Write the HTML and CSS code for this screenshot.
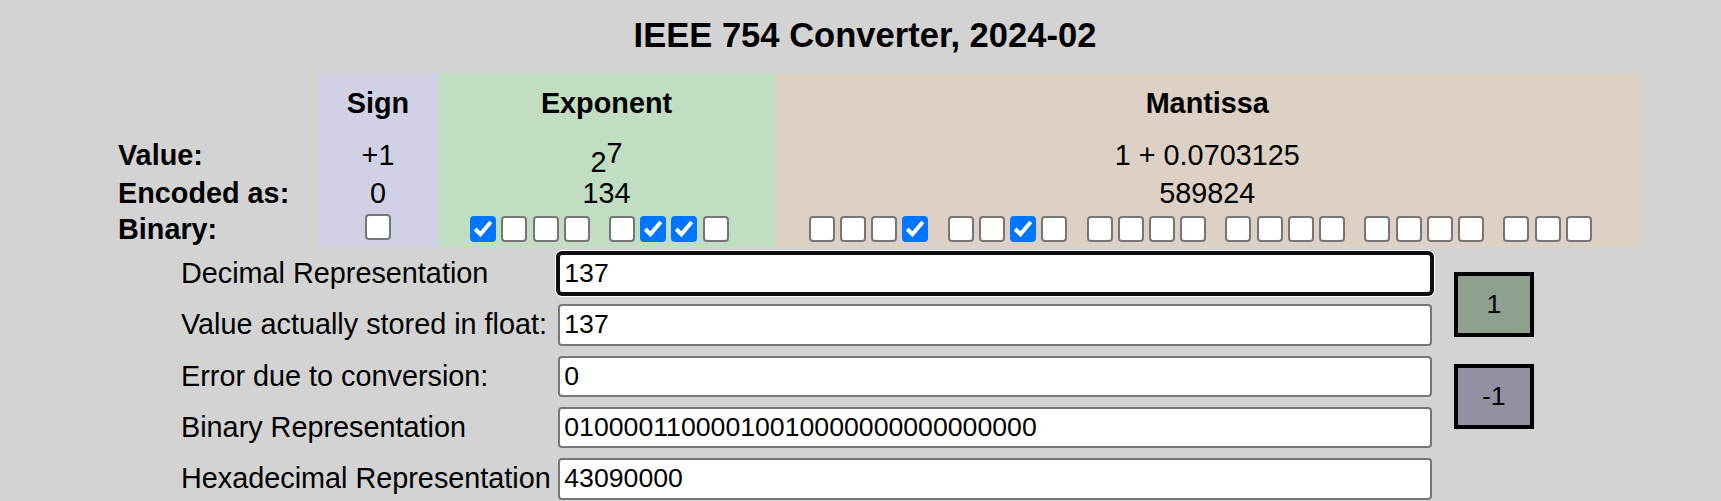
FILE: index.html
```html
<!DOCTYPE html>
<html lang="en">
<head>
<meta charset="utf-8">
<title>IEEE 754 Converter</title>
<link rel="stylesheet" href="styles.css">
</head>
<body>
<h1 class="title">IEEE 754 Converter, 2024-02</h1>
<table class="fields">
  <colgroup><col class="c-label"><col class="c-sign"><col class="c-exp"><col class="c-man"></colgroup>
  <tr class="r-head">
    <td></td>
    <th class="sign">Sign</th>
    <th class="exp">Exponent</th>
    <th class="man">Mantissa</th>
  </tr>
  <tr class="r-val">
    <th class="lbl">Value:</th>
    <td class="sign">+1</td>
    <td class="exp exp-val">2<sup>7</sup></td>
    <td class="man">1 + 0.0703125</td>
  </tr>
  <tr class="r-enc">
    <th class="lbl">Encoded as:</th>
    <td class="sign">0</td>
    <td class="exp">134</td>
    <td class="man">589824</td>
  </tr>
  <tr class="r-bin">
    <th class="lbl">Binary:</th>
    <td class="sign bitcell bitcell-sign">
      <div class="bits bits-sign"><span class="grp"><span class="bit"></span></span></div>
    </td>
    <td class="exp bitcell">
      <div class="bits">
        <span class="grp">
          <span class="bit on"><svg viewBox="0 0 22 22"><path d="M3.2 11 L8.4 16.2 L18.8 4"/></svg></span>
          <span class="bit"></span><span class="bit"></span><span class="bit"></span>
        </span>
        <span class="grp">
          <span class="bit"></span>
          <span class="bit on"><svg viewBox="0 0 22 22"><path d="M3.2 11 L8.4 16.2 L18.8 4"/></svg></span>
          <span class="bit on"><svg viewBox="0 0 22 22"><path d="M3.2 11 L8.4 16.2 L18.8 4"/></svg></span>
          <span class="bit"></span>
        </span>
      </div>
    </td>
    <td class="man bitcell">
      <div class="bits">
        <span class="grp">
          <span class="bit"></span><span class="bit"></span><span class="bit"></span>
          <span class="bit on"><svg viewBox="0 0 22 22"><path d="M3.2 11 L8.4 16.2 L18.8 4"/></svg></span>
        </span>
        <span class="grp">
          <span class="bit"></span><span class="bit"></span>
          <span class="bit on"><svg viewBox="0 0 22 22"><path d="M3.2 11 L8.4 16.2 L18.8 4"/></svg></span>
          <span class="bit"></span>
        </span>
        <span class="grp"><span class="bit"></span><span class="bit"></span><span class="bit"></span><span class="bit"></span></span>
        <span class="grp"><span class="bit"></span><span class="bit"></span><span class="bit"></span><span class="bit"></span></span>
        <span class="grp"><span class="bit"></span><span class="bit"></span><span class="bit"></span><span class="bit"></span></span>
        <span class="grp"><span class="bit"></span><span class="bit"></span><span class="bit"></span></span>
      </div>
    </td>
  </tr>
</table>

<div class="form">
  <label>Decimal Representation</label>
  <input type="text" class="focused" value="137">
  <label>Value actually stored in float:</label>
  <input type="text" value="137">
  <label>Error due to conversion:</label>
  <input type="text" value="0">
  <label>Binary Representation</label>
  <input type="text" value="01000011000010010000000000000000">
  <label>Hexadecimal Representation</label>
  <input type="text" value="43090000">
  <div class="steps">
    <button type="button" class="step step-up">1</button>
    <button type="button" class="step step-down">-1</button>
  </div>
</div>
</body>
</html>
```
FILE: styles.css
```css
html, body {
  margin: 0;
  padding: 0;
}
body {
  background: #d3d3d3;
  font-family: "Liberation Sans", Arial, sans-serif;
  font-size: 28.8px;
  color: #000;
  overflow: hidden;
}
.title {
  margin: 0 0 17.8px 0;
  padding: 15.5px 0 0 9px;
  font-size: 34.56px;
  line-height: 39.7px;
  font-weight: bold;
  text-align: center;
}

/* field table */
.fields {
  margin-left: 118px;
  border-collapse: collapse;
  border-spacing: 0;
  table-layout: fixed;
  width: 1521.5px;
}
.c-label { width: 200px; }
.c-sign { width: 120px; }
.c-exp { width: 337px; }
.c-man { width: 864.5px; }
.fields td, .fields th {
  padding: 0;
  vertical-align: top;
  line-height: 33px;
  text-align: center;
  font-weight: normal;
}
.fields .r-head th { font-weight: bold; }
.fields .lbl {
  text-align: left;
  font-weight: bold;
  white-space: nowrap;
}
.sign { background: #d1d1e5; }
.exp { background: #c1ddc2; }
.man { background: #ddd1c5; }

.fields .r-head > * { padding: 13.8px 0 16.9px; }
.fields .r-val > *, .fields .r-enc > * { padding: 2.5px 0; }
.fields .r-val .exp-val { padding: 12px 0 0; line-height: 26px; }
.exp-val sup {
  font-size: inherit;
  vertical-align: 9.4px;
  line-height: 0;
}
.fields .r-bin > * { padding: 0 0 1.3px; }
.fields .r-bin .bitcell { padding: 3.3px 0 5px; }
.fields .r-bin .bitcell-sign { padding: 1.8px 0 6.5px; }

.bits {
  display: flex;
  justify-content: center;
  gap: 5.2px;
  height: 26px;
}
.grp {
  display: flex;
  gap: 5.2px;
  margin-right: 14.2px;
}
.bits-sign .grp { margin-right: 0; }
.bit {
  display: block;
  width: 26px;
  height: 26px;
  box-sizing: border-box;
  border: 2px solid #767676;
  border-radius: 4px;
  background: #fff;
}
.bit.on {
  background: #0075ff;
  border-color: #0075ff;
}
.bit svg {
  display: block;
  width: 22px;
  height: 22px;
  fill: none;
  stroke: #fff;
  stroke-width: 4;
}

/* form */
.form {
  display: grid;
  grid-template-columns: 370px 874px auto;
  column-gap: 7.3px;
  row-gap: 9.9px;
  margin: 6px 0 0 181px;
  align-items: center;
}
.form label {
  grid-column: 1;
  line-height: 33px;
  white-space: nowrap;
}
.form input {
  grid-column: 2;
  width: 874px;
  height: 41.4px;
  box-sizing: border-box;
  margin: 0;
  border: 2px solid #767676;
  border-radius: 4px;
  padding: 0 4px;
  background: #fff;
  color: #000;
  font-family: "Liberation Sans", Arial, sans-serif;
  font-size: 26.67px;
  outline: none;
}
.form input.focused {
  border-color: #101010;
  box-shadow: 0 0 0 2px #101010, 0 0 0 3px #fff;
}
.steps {
  grid-column: 3;
  grid-row: 1 / span 5;
  align-self: start;
  display: flex;
  flex-direction: column;
  gap: 26.7px;
  padding-top: 19.3px;
  margin-left: 14.4px;
}
.step {
  width: 79.7px;
  height: 65px;
  box-sizing: border-box;
  border: 4px solid #000;
  border-radius: 0;
  padding: 0;
  margin: 0;
  color: #000;
  font-family: "Liberation Sans", Arial, sans-serif;
  font-size: 26.67px;
}
.step-up { background: #8fa08f; }
.step-down { background: #9191a1; }
```
